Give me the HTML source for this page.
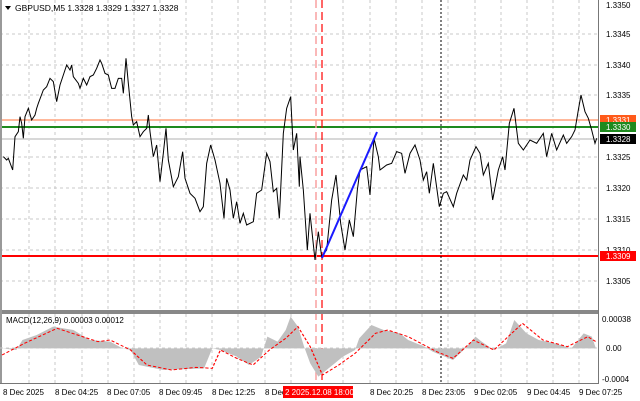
<!DOCTYPE html>
<html><head><meta charset="utf-8"><style>
html,body{margin:0;padding:0;background:#fff;}
svg{display:block;font-family:"Liberation Sans",Tahoma,sans-serif;}
</style></head><body>
<svg width="640" height="401" viewBox="0 0 640 401" xmlns="http://www.w3.org/2000/svg">
<rect width="640" height="401" fill="#fff"/>
<!-- grid -->
<g stroke="#c8c8c8" stroke-width="1" stroke-dasharray="3,3">
<path d="M0 34H598M0 65H598M0 95H598M0 157H598M0 188H598M0 219H598M0 250H598M0 281H598"/>
<path d="M29 0V310M55 0V310M82 0V310M108 0V310M134 0V310M160 0V310M186 0V310M212 0V310M238 0V310M265 0V310M291 0V310M343 0V310M370 0V310M396 0V310M422 0V310M448 0V310M475 0V310M501 0V310M527 0V310M553 0V310M579 0V310"/>
<path d="M29 314V383M55 314V383M82 314V383M108 314V383M134 314V383M160 314V383M186 314V383M212 314V383M238 314V383M265 314V383M291 314V383M343 314V383M370 314V383M396 314V383M422 314V383M448 314V383M475 314V383M501 314V383M527 314V383M553 314V383M579 314V383"/>
</g>
<!-- level lines -->
<line x1="0" y1="139" x2="598" y2="139" stroke="#d8d8d8" stroke-width="2"/>
<line x1="0" y1="120" x2="598" y2="120" stroke="#ffa07a" stroke-width="1.5"/>
<line x1="0" y1="127" x2="598" y2="127" stroke="#1e8a1e" stroke-width="2"/>
<line x1="0" y1="256" x2="598" y2="256" stroke="#f00" stroke-width="2"/>
<!-- verticals -->
<line x1="316" y1="0" x2="316" y2="384" stroke="#f8a0a0" stroke-width="1.5" stroke-dasharray="8,4"/>
<line x1="322" y1="0" x2="322" y2="384" stroke="#f00" stroke-width="1.2" stroke-dasharray="8,4"/>
<line x1="441" y1="0" x2="441" y2="384" stroke="#000" stroke-width="1" stroke-dasharray="2,2"/>
<!-- price -->
<g fill="none" stroke="#000" stroke-width="1" vector-effect="non-scaling-stroke">
<polyline transform="translate(0,50) scale(0.33333)" vector-effect="non-scaling-stroke" points="10,320 20,330 25,325 38,360 45,260 55,245 60,200 65,220 70,265 75,200 85,175 95,210 105,195 110,175 115,160 130,120 140,110 150,85 160,95 170,155 180,105 190,75 200,45 210,60 215,45 220,80 235,100 240,115 250,85 260,105 270,80 280,75 290,55 300,30 305,40 315,70 325,75 335,115 345,115 355,85 365,85 370,130 378,25 385,100 395,200 400,225 410,215 420,260 430,245 440,235 445,195 450,245 460,320 470,285 480,395 490,310 498,235 505,330 520,410 535,380 548,305 555,385 570,430 585,445 600,485 610,470 620,340 632,285 645,330 660,400 672,505 680,385 690,420 700,505 710,455 720,520 730,490 740,525 760,515 770,430 785,420 800,310 810,335 820,425 830,415 838,505 850,250 860,175 872,140 880,300 890,250 898,410 900,320"/>
<polyline transform="translate(300,50) scale(0.33333)" vector-effect="non-scaling-stroke" points="0,320 10,420 22,600 30,490 45,630 55,545 65,620 80,600 95,450 108,375 122,520 135,600 148,510 160,560 172,420 180,360 200,350 210,435 222,265 235,320 240,360 260,345 275,340 290,305 305,310 315,370 330,310 345,285 360,330 370,390 380,365 388,430 400,340 418,470 430,430 440,425 460,470 470,430 490,375 500,390 510,330 528,290 540,310 550,375 565,340 578,450 595,360 608,320 615,360 628,220 642,175 655,280 670,300 690,270 710,280 730,250 740,320 755,250 770,300 790,255 800,280 815,260 825,240 835,180 843,135 855,185 865,205 875,240 885,280 890,265"/>
</g>
<line x1="322" y1="258" x2="377" y2="132" stroke="#1a1aff" stroke-width="2"/>
<!-- separator -->
<rect x="0" y="310" width="598" height="4" fill="#888"/>
<rect x="0" y="0" width="2" height="384" fill="#999"/>
<!-- MACD -->
<line x1="0" y1="348" x2="598" y2="348" stroke="#ccc" stroke-dasharray="3,3"/>
<g transform="translate(0,280) scale(0.40816,0.33333)">
<path fill="#c0c0c0" d="M5 205 L40 210 L55 180 L90 165 L130 140 L180 150 L220 180 L270 185 L300 205 L320 210 L340 255 L400 270 L440 268 L500 265 L520 205 L540 210 L580 230 L610 255 L640 230 L655 170 L680 185 L700 150 L712 110 L730 140 L745 200 L760 250 L780 290 L800 270 L820 250 L840 230 L870 210 L880 175 L910 135 L940 150 L980 160 L1000 180 L1040 200 L1060 215 L1080 225 L1110 240 L1140 205 L1165 170 L1180 185 L1210 210 L1240 190 L1260 120 L1290 160 L1320 180 L1360 190 L1400 205 L1430 160 L1450 170 L1460 205 Z"/>
<polyline fill="none" stroke="#f00" stroke-width="3" stroke-dasharray="8,5" points="5,225 60,190 140,145 190,165 240,185 270,180 320,210 360,255 420,270 480,262 520,265 540,210 580,235 620,255 660,210 700,175 730,140 760,200 790,285 830,255 870,220 920,160 950,150 1000,170 1070,215 1110,235 1160,180 1210,210 1280,130 1330,180 1390,200 1440,170 1460,185"/>
</g>
<line x1="0" y1="383.5" x2="598" y2="383.5" stroke="#777"/>
<!-- right axis -->
<line x1="598.5" y1="0" x2="598.5" y2="384" stroke="#777"/>
<g font-size="8" fill="#000">
<text x="606" y="8">1.3350</text><text x="606" y="37">1.3345</text><text x="606" y="68">1.3340</text><text x="606" y="98">1.3335</text><text x="606" y="160">1.3325</text><text x="606" y="191">1.3320</text><text x="606" y="222">1.3315</text><text x="606" y="253">1.3310</text><text x="606" y="284">1.3305</text>
<text x="602" y="322">0.00038</text><text x="606" y="351">0.00</text><text x="602" y="382">-0.0004</text>
</g>
<rect x="600" y="115" width="36" height="10" fill="#ff5a1a"/><text x="606" y="123" font-size="8" fill="#fff">1.3331</text>
<rect x="600" y="122" width="36" height="10" fill="#1e8a1e"/><text x="606" y="130" font-size="8" fill="#fff">1.3330</text>
<rect x="600" y="134" width="36" height="10" fill="#000"/><text x="606" y="142" font-size="8" fill="#fff">1.3328</text>
<rect x="600" y="251" width="36" height="10" fill="#f00"/><text x="606" y="259" font-size="8" fill="#fff">1.3309</text>
<!-- titles -->
<path d="M5 6L11 6L8 10Z" fill="#000"/>
<text x="15" y="11" font-size="8.5" fill="#000">GBPUSD,M5  1.3328 1.3329 1.3327 1.3328</text>
<text x="6" y="323" font-size="8" fill="#000">MACD(12,26,9) 0.00003 0.00012</text>
<!-- time axis -->
<g font-size="8" fill="#000">
<text x="3" y="395">8 Dec 2025</text><text x="55" y="395">8 Dec 04:25</text><text x="107" y="395">8 Dec 07:05</text><text x="159" y="395">8 Dec 09:45</text><text x="212" y="395">8 Dec 12:25</text><text x="265" y="395">8 Dec</text><text x="370" y="395">8 Dec 20:25</text><text x="422" y="395">8 Dec 23:05</text><text x="474" y="395">9 Dec 02:05</text><text x="527" y="395">9 Dec 04:45</text><text x="579" y="395">9 Dec 07:25</text>
</g>
<rect x="283" y="386" width="70" height="12" fill="#f00"/>
<text x="285" y="395" font-size="8" fill="#fff">2 2025.12.08 18:00</text>
</svg>
</body></html>
